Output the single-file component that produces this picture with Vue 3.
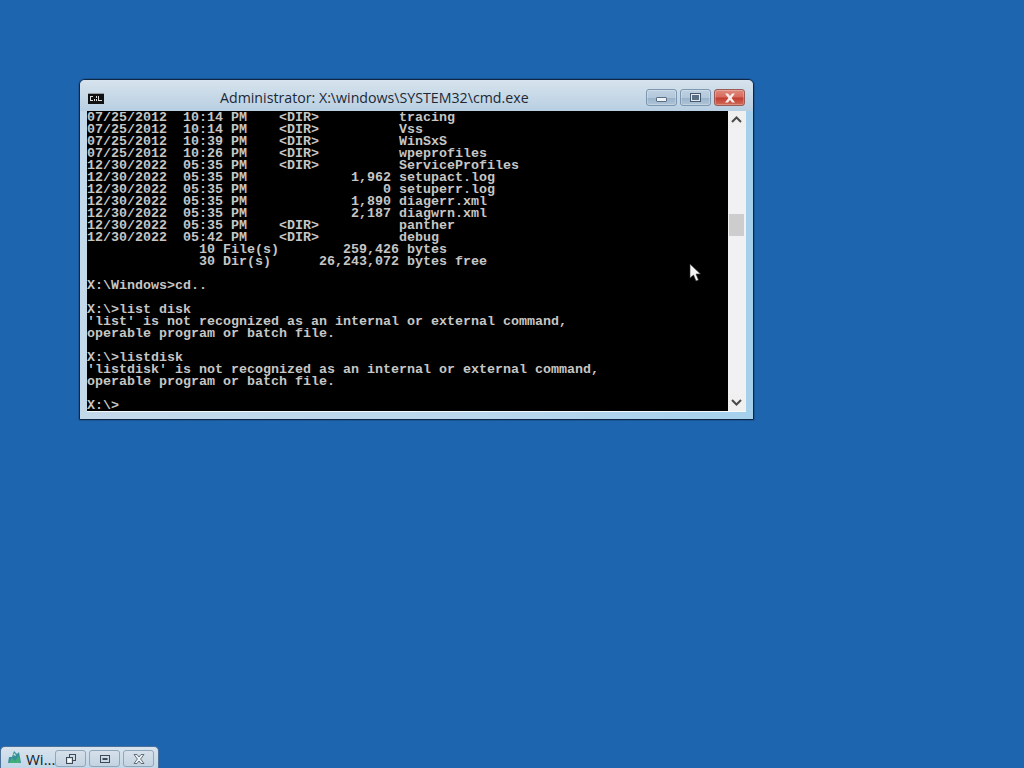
<script setup>
const lines = [
  '07/25/2012  10:14 PM    <DIR>          tracing',
  '07/25/2012  10:14 PM    <DIR>          Vss',
  '07/25/2012  10:39 PM    <DIR>          WinSxS',
  '07/25/2012  10:26 PM    <DIR>          wpeprofiles',
  '12/30/2022  05:35 PM    <DIR>          ServiceProfiles',
  '12/30/2022  05:35 PM             1,962 setupact.log',
  '12/30/2022  05:35 PM                 0 setuperr.log',
  '12/30/2022  05:35 PM             1,890 diagerr.xml',
  '12/30/2022  05:35 PM             2,187 diagwrn.xml',
  '12/30/2022  05:35 PM    <DIR>          panther',
  '12/30/2022  05:42 PM    <DIR>          debug',
  '              10 File(s)        259,426 bytes',
  '              30 Dir(s)      26,243,072 bytes free',
  '',
  'X:\\Windows>cd..',
  '',
  'X:\\>list disk',
  "'list' is not recognized as an internal or external command,",
  'operable program or batch file.',
  '',
  'X:\\>listdisk',
  "'listdisk' is not recognized as an internal or external command,",
  'operable program or batch file.',
  '',
  'X:\\>',
]
</script>

<template>
  <div class="desktop">
    <section class="window">
      <header class="titlebar">
        <svg class="app-icon" width="16" height="11" viewBox="0 0 16 11">
          <rect x="0" y="0" width="16" height="11" fill="#111" />
          <rect x="0" y="0" width="16" height="1" fill="#9a9a9a" />
          <rect x="2" y="3" width="3" height="5" fill="#ddd" />
          <rect x="3" y="4" width="2" height="3" fill="#111" />
          <rect x="6" y="6" width="1" height="2" fill="#ddd" />
          <rect x="8" y="3" width="1" height="2" fill="#ddd" />
          <rect x="8" y="6" width="1" height="2" fill="#ddd" />
          <rect x="10" y="3" width="1" height="5" fill="#ddd" />
          <rect x="11" y="7" width="3" height="1" fill="#ddd" />
        </svg>
        <h1 class="title">Administrator: X:\windows\SYSTEM32\cmd.exe</h1>
        <div class="controls">
          <button class="ctl" aria-label="Minimize"><span class="glyph-min"></span></button>
          <button class="ctl" aria-label="Maximize"><span class="glyph-max"></span></button>
          <button class="ctl close" aria-label="Close">
            <svg width="14" height="10" viewBox="0 0 14 10"><path d="M2 0.5 L5 0.5 L7 3 L9 0.5 L12 0.5 L8.6 5 L12 9.5 L9 9.5 L7 7 L5 9.5 L2 9.5 L5.4 5 Z" fill="#f6ecea" /></svg>
          </button>
        </div>
      </header>
      <div class="client">
        <pre class="console"><div v-for="(l, i) in lines" :key="i" class="line">{{ l }}</div></pre>
        <div class="scrollbar">
          <svg class="arrow" width="11" height="7" viewBox="0 0 11 7"><path d="M1 6 L5.5 1.5 L10 6" fill="none" stroke="#4a4a4a" stroke-width="2" /></svg>
          <div class="track"><div class="thumb"></div></div>
          <svg class="arrow" width="11" height="7" viewBox="0 0 11 7"><path d="M1 1 L5.5 5.5 L10 1" fill="none" stroke="#4a4a4a" stroke-width="2" /></svg>
        </div>
      </div>
    </section>

    <svg class="cursor" width="13" height="20" viewBox="0 0 13 20">
      <path d="M1 1 L1 15 L4.5 12 L7 18 L9.5 17 L7 11 L11.5 11 Z" fill="#f4f4f4" stroke="#333" stroke-width="0.6" />
    </svg>

    <section class="minimized">
      <svg class="min-icon" width="13" height="13" viewBox="0 0 13 13">
        <path d="M0 12 L1 6 L4 6 L6 0 L9 3 L11 1 L13 12 Z" fill="#3a8f9a" />
        <path d="M1 12 L4 7 L7 10 L11 5 L12 12 Z" fill="#3fb07a" />
        <path d="M5 4 L7 2 L8 5 Z" fill="#bfe6cf" />
      </svg>
      <span class="min-title">Wi...</span>
      <div class="min-controls">
        <button class="min-btn" aria-label="Restore">
          <svg width="12" height="12" viewBox="0 0 12 12"><rect x="4.5" y="1.5" width="6" height="6" fill="none" stroke="#3d4a58" /><rect x="1.5" y="4.5" width="6" height="6" fill="#d5dfe8" stroke="#3d4a58" /><rect x="3" y="6" width="3" height="3" fill="#fff" /></svg>
        </button>
        <button class="min-btn" aria-label="Maximize">
          <svg width="12" height="10" viewBox="0 0 12 10"><rect x="1.5" y="1.5" width="9" height="7" fill="none" stroke="#3d4a58" stroke-width="1" /><rect x="3.5" y="4" width="5" height="2" fill="#3d4a58" /></svg>
        </button>
        <button class="min-btn" aria-label="Close">
          <svg width="14" height="10" viewBox="0 0 14 10"><path d="M2 0.5 L5 0.5 L7 3 L9 0.5 L12 0.5 L8.6 5 L12 9.5 L9 9.5 L7 7 L5 9.5 L2 9.5 L5.4 5 Z" fill="#eef2f5" stroke="#46525e" stroke-width="0.8" /></svg>
        </button>
      </div>
    </section>
  </div>
</template>

<style>
html, body { margin: 0; padding: 0; background: #1e65b0; }
</style>

<style scoped>
.desktop {
  position: relative;
  width: 1024px;
  height: 768px;
  overflow: hidden;
  background: #1e65b0;
}
.window {
  position: absolute;
  left: 79px;
  top: 79px;
  width: 675px;
  height: 341px;
  box-sizing: border-box;
  border: 1px solid #0f2746;
  border-radius: 6px 6px 1px 1px;
  background: linear-gradient(90deg, #c3d9ea 0%, #b8d6ec 60%, #a5d0ec 100%);
  box-shadow: 0 0 0 1px rgba(15, 39, 70, 0.25);
  display: flex;
  flex-direction: column;
}
.titlebar {
  height: 31px;
  flex: none;
  display: flex;
  align-items: flex-start;
  position: relative;
  background: linear-gradient(180deg, #d7e3ed 0%, #c6d8e7 55%, #b8cfe2 100%);
  border-radius: 5px 5px 0 0;
}
.app-icon {
  margin: 13px 0 0 8px;
  flex: none;
}
.title {
  position: absolute;
  left: 140px;
  top: 8px;
  margin: 0;
  font: 400 14.2px/20px "Open Sans", "Noto Sans", sans-serif;
  color: #1d2835;
  white-space: nowrap;
}
.controls {
  margin: 9px 8px 0 auto;
  display: flex;
  gap: 3px;
}
.ctl {
  width: 31px;
  height: 17px;
  padding: 0;
  box-sizing: border-box;
  border: 1px solid #7d97b0;
  border-radius: 3px;
  background: linear-gradient(180deg, #bed1e2 0%, #b3c8da 50%, #9bb3c9 54%, #aec4d7 100%);
  box-shadow: inset 0 0 0 1px rgba(255,255,255,0.25);
  display: flex;
  align-items: center;
  justify-content: center;
}
.glyph-min {
  width: 11px;
  height: 5px;
  margin-top: 3px;
  box-sizing: border-box;
  background: #eef3f7;
  border: 1px solid #5a6f83;
  border-radius: 1px;
}
.glyph-max {
  width: 11px;
  height: 9px;
  box-sizing: border-box;
  border: 2px solid #e2eaf1;
  outline: 1px solid #46596c;
  outline-offset: -1px;
  background: #5d7184;
}
.close {
  border-color: #9a5a55;
  background: linear-gradient(180deg, #dd8a7d 0%, #d8695c 48%, #c23c30 52%, #cf6a58 100%);
}
.client {
  flex: 1;
  display: flex;
  margin: 0 7px 8px 7px;
  min-height: 0;
  box-shadow: 0 1px 0 #f4f9fc;
}
.console {
  width: 641px;
  height: 300px;
  box-sizing: border-box;
  padding-top: 1px;
  margin: 0;
  background: #000;
  color: #c6c6c6;
  font: 700 13.33px/12px "Liberation Mono", "DejaVu Sans Mono", monospace;
}
.line {
  height: 12px;
  white-space: pre;
}
.scrollbar {
  width: 18px;
  height: 300px;
  background: #f0f0f0;
  display: flex;
  flex-direction: column;
  align-items: center;
}
.arrow {
  flex: none;
  margin: 5px 1px 5px 0;
}
.track {
  flex: 1;
  width: 100%;
  position: relative;
  background: #f1f1f3;
}
.thumb {
  position: absolute;
  left: 1px;
  width: 15px;
  top: 86px;
  height: 22px;
  background: #cdcdcd;
}
.cursor {
  position: absolute;
  left: 689px;
  top: 263px;
}
.minimized {
  position: absolute;
  left: 0;
  top: 746px;
  width: 159px;
  height: 22px;
  box-sizing: border-box;
  border: 1px solid #4b7099;
  border-bottom: none;
  border-radius: 5px 5px 0 0;
  background: linear-gradient(180deg, #d8e3ed 0%, #c2d6e7 100%);
  display: flex;
  align-items: flex-start;
}
.min-icon {
  margin: 4px 0 0 7px;
  flex: none;
}
.min-title {
  margin: 1px 0 0 5px;
  font: 400 15px/22px "Open Sans", "Noto Sans", sans-serif;
  color: #16202c;
}
.min-controls {
  margin: 3px 4px 0 auto;
  display: flex;
  gap: 3px;
}
.min-btn {
  width: 31px;
  height: 17px;
  padding: 0;
  box-sizing: border-box;
  border: 1px solid #8fa6bb;
  border-radius: 3px;
  background: linear-gradient(180deg, #d5e0ea 0%, #c4d3e1 100%);
  display: flex;
  align-items: center;
  justify-content: center;
}
</style>
